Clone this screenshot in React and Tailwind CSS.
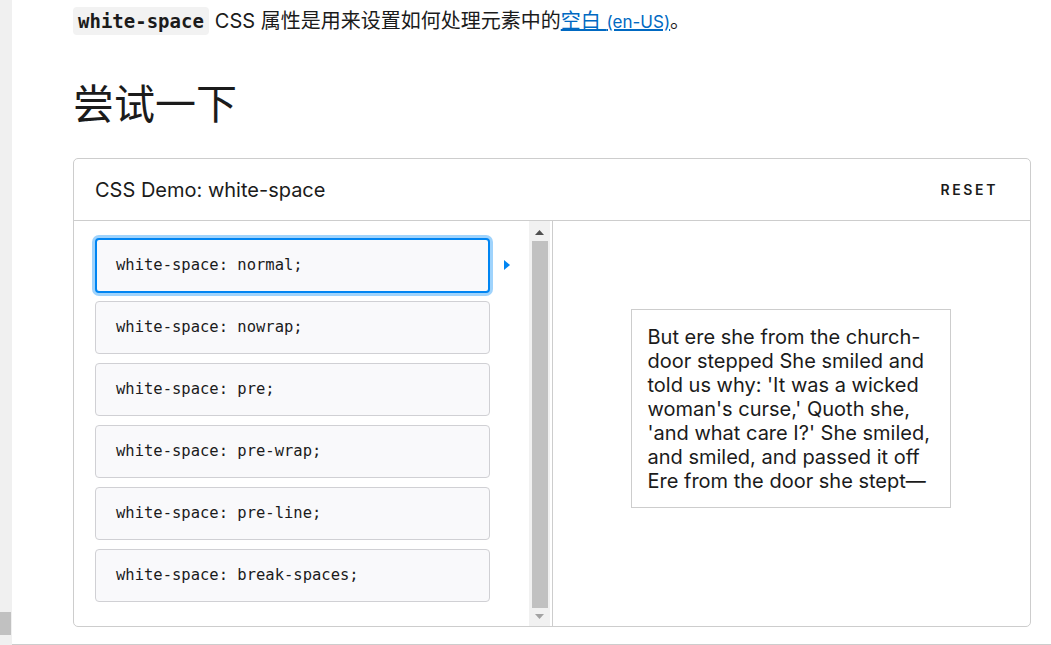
import React from "react";

const items = [
  "white-space: normal;",
  "white-space: nowrap;",
  "white-space: pre;",
  "white-space: pre-wrap;",
  "white-space: pre-line;",
  "white-space: break-spaces;",
];

export default function App() {
  return (
    <div className="w-[1051px] h-[645px] overflow-hidden bg-white flex" style={{ fontFamily: "Inter, 'Noto Sans CJK SC', sans-serif" }}>
      <div className="w-[12px] h-full bg-[#f0f0f0] flex flex-col justify-end pb-[10px]">
        <div className="w-[11px] h-[23px] bg-[#c1c1c1]" />
      </div>
      <div className="flex-1 flex flex-col border-b border-[#cdcdcd]">
        <div className="pl-[61px] pr-[20px] flex-1 flex flex-col">
          <p className="mt-[7px] h-[28px] flex items-center text-[20px] text-[#1b1b1b] leading-[28px] whitespace-nowrap">
            <code className="bg-[#f2f2f2] rounded-[4px] px-[5px] h-[28px] flex items-center font-bold text-[19px] text-[#1b1b1b]" style={{ fontFamily: "'DejaVu Sans Mono', monospace" }}>white-space</code>
            <span className="ml-[6px]">CSS 属性是用来设置如何处理元素中的</span>
            <span className="text-[#0069c2] underline">空白 <span className="text-[17px]">(en-US)</span></span>
            <span>。</span>
          </p>
          <h2 className="mt-[44px] text-[41px] leading-[50px] text-[#1b1b1b]">尝试一下</h2>
          <div className="mt-[29px] w-[958px] h-[469px] border border-[#cdcdcd] rounded-[5px] flex flex-col">
            <div className="h-[62px] flex items-center justify-between pl-[21px] pr-[32px] border-b border-[#cdcdcd]">
              <span className="text-[20px] text-[#1b1b1b]">CSS Demo: white-space</span>
              <span className="text-[14px] font-semibold tracking-[2.6px] text-[#1b1b1b]">RESET</span>
            </div>
            <div className="flex-1 flex">
              <div className="w-[479px] flex border-r border-[#cdcdcd]">
                <div className="flex-1 flex flex-col gap-[9px] pl-[21px] pt-[17px]">
                  {items.map((t, i) => (
                    <div key={t} className="flex items-center">
                      <div
                        className={
                          i === 0
                            ? "w-[395px] h-[55px] mb-[-1px] rounded-[4px] border-2 border-[#0085f2] ring-[3px] ring-[#9fd3fc] bg-[#f9f9fb] flex items-center pl-[19px]"
                            : "w-[395px] h-[53px] rounded-[4px] border border-[#d0d0d4] bg-[#f9f9fb] flex items-center pl-[20px]"
                        }
                      >
                        <span className="text-[15.5px] text-[#1b1b1b]" style={{ fontFamily: "'DejaVu Sans Mono', monospace" }}>{t}</span>
                      </div>
                      {i === 0 && (
                        <svg width="6" height="10" viewBox="0 0 6 10" className="ml-[14px]">
                          <path d="M0 0 L6 5 L0 10 Z" fill="#0085f2" />
                        </svg>
                      )}
                    </div>
                  ))}
                </div>
                <div className="w-[21px] bg-[#f1f1f1] flex flex-col items-center mr-[2px]">
                  <svg width="9" height="5" viewBox="0 0 9 5" className="mt-[9px]">
                    <path d="M0 5 L4.5 0 L9 5 Z" fill="#505050" />
                  </svg>
                  <div className="mt-[6px] w-[16px] flex-1 bg-[#c1c1c1]" />
                  <svg width="9" height="5" viewBox="0 0 9 5" className="mt-[6px] mb-[7px]">
                    <path d="M0 0 L4.5 5 L9 0 Z" fill="#a3a3a3" />
                  </svg>
                </div>
              </div>
              <div className="flex-1 flex items-center justify-center">
                <div className="w-[320px] h-[199px] border border-[#cdcdcd] pl-[16px] pr-[14px] pt-[15px] text-[20px] leading-[24px] text-[#1b1b1b] mt-[-30px] mr-[2px]">
                  But ere she from the church-door stepped She smiled and told us why: 'It was a wicked woman's curse,' Quoth she, 'and what care I?' She smiled, and smiled, and passed it off Ere from the door she stept—
                </div>
              </div>
            </div>
          </div>
        </div>
      </div>
    </div>
  );
}
